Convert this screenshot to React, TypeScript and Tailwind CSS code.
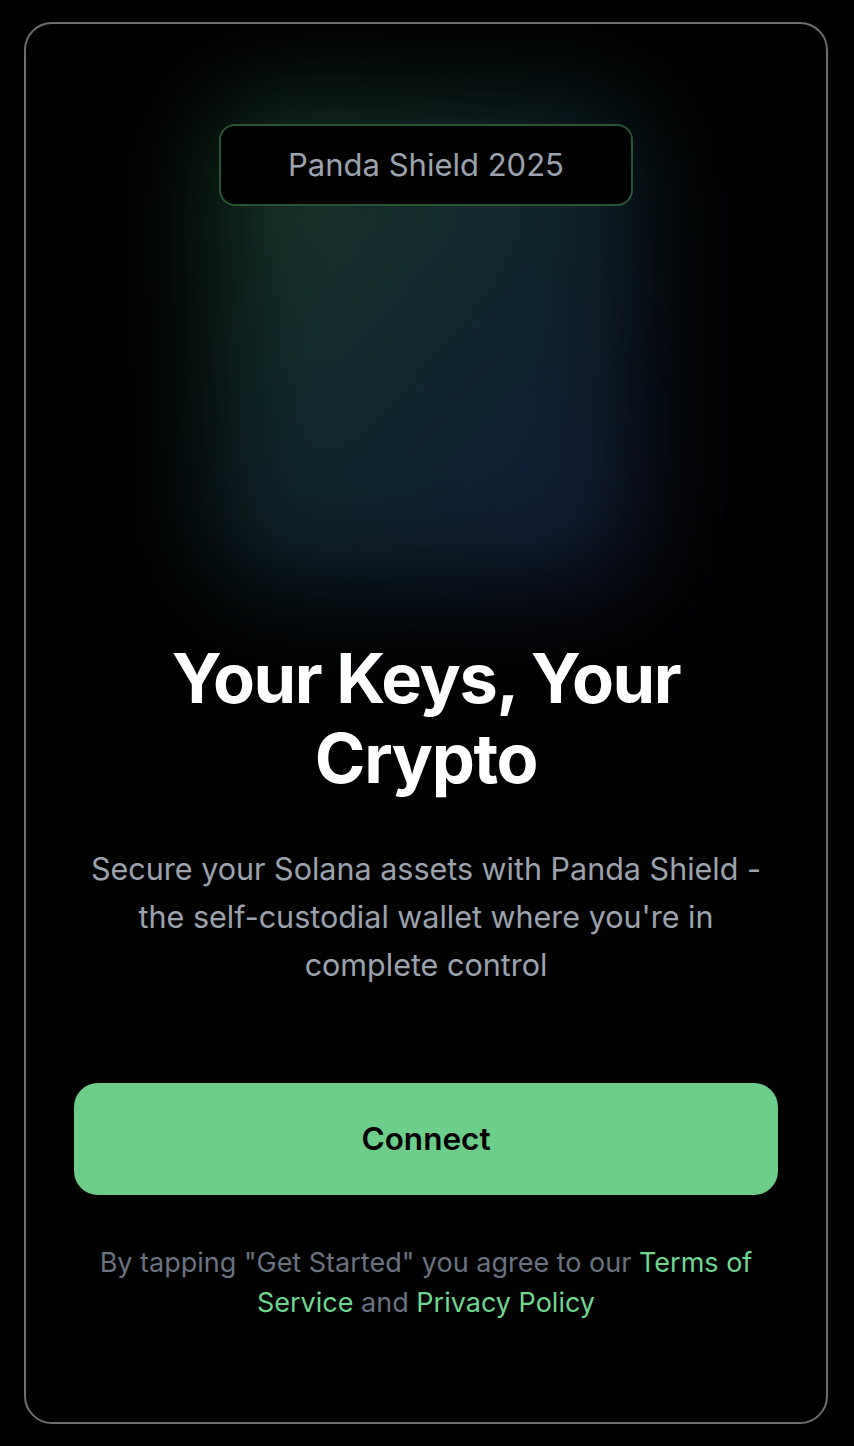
export default function App() {
  return (
    <div className="min-h-screen bg-black pl-[24px] pr-[26px] py-[22px] flex font-['Inter',sans-serif]">
      <div className="relative flex-1 flex flex-col items-center overflow-hidden rounded-[28px] border-2 border-[#6f6f6f] bg-black px-[48px]">
        {/* hero glow */}
        <div className="pointer-events-none absolute left-[190px] top-[80px] h-[480px] w-[420px] rounded-[40px] bg-gradient-to-br from-[#1f4a2e] via-[#15303a] to-[#18234a] opacity-80 blur-[55px]" />

        <div className="relative mt-[100px] flex h-[82px] w-[414px] items-center justify-center rounded-[16px] border-2 border-[#2a5535] bg-black text-[31px] text-[#9ca3af]">
          Panda Shield 2025
        </div>

        <h1 className="relative mt-[433px] text-center text-[68.5px] font-bold leading-[80px] tracking-[-0.02em] text-white">
          Your Keys, Your Crypto
        </h1>

        <p className="mt-[46px] max-w-[680px] text-center text-[30.5px] leading-[48px] text-[#9ca3af]">
          Secure your Solana assets with Panda Shield - the self-custodial
          wallet where you're in complete control
        </p>

        <button className="mt-[94px] h-[112px] w-full rounded-[24px] bg-[#6dce8a] text-[31.5px] font-semibold text-black">
          Connect
        </button>

        <p className="mt-[48px] text-center text-[27px] leading-[40px] text-[#6b7280]">
          By tapping "Get Started" you agree to our{" "}
          <a className="text-[#6ed891]">Terms of Service</a> and{" "}
          <a className="text-[#6ed891]">Privacy Policy</a>
        </p>
      </div>
    </div>
  );
}
